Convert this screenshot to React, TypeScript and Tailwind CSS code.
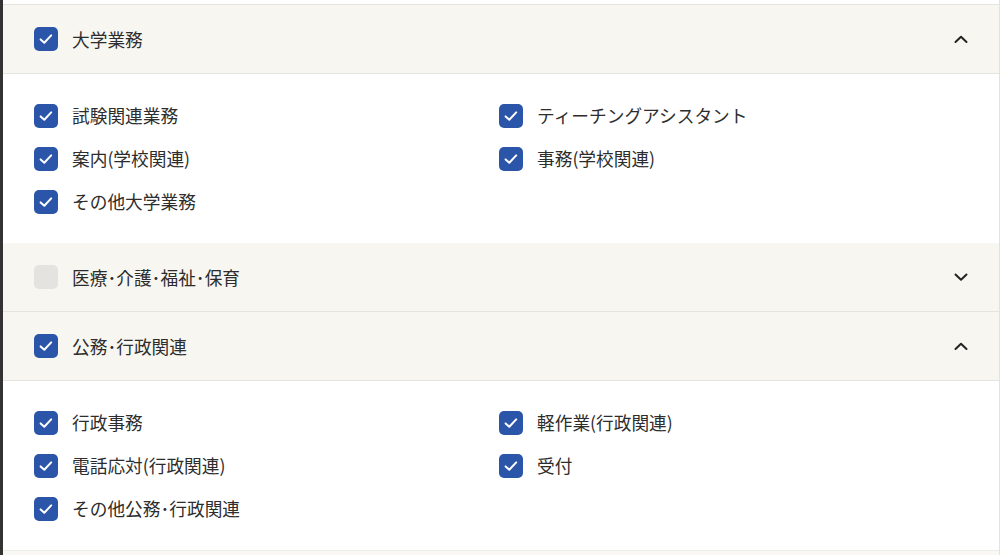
import React from "react";

const Check = ({ on }: { on: boolean }) =>
  on ? (
    <span className="flex h-6 w-6 shrink-0 items-center justify-center rounded-[5px] bg-[#2a55a8]">
      <svg width="16" height="16" viewBox="0 0 16 16" fill="none">
        <path d="M2.6 8.4 L6.3 11.8 L13.2 4.4" stroke="white" strokeWidth="2" strokeLinecap="round" strokeLinejoin="round" />
      </svg>
    </span>
  ) : (
    <span className="h-6 w-6 shrink-0 rounded-[5px] bg-[#e4e3e0]" />
  );

const Chevron = ({ up }: { up: boolean }) => (
  <svg width="16" height="10" viewBox="0 0 16 10" fill="none">
    <path d={up ? "M2.5 8 L8 2.8 L13.5 8" : "M2.5 2.5 L8 7.7 L13.5 2.5"} stroke="#222" strokeWidth="2" strokeLinecap="round" strokeLinejoin="round" />
  </svg>
);

const Header = ({ label, on, up }: { label: string; on: boolean; up: boolean }) => (
  <div className="flex h-[69px] items-center justify-between border-b border-[#e6e4de] bg-[#f7f6f1] pl-[31px] pr-[30px]">
    <div className="flex items-center gap-[14px]">
      <Check on={on} />
      <span className="text-[17.7px] text-[#2d2d2d]">{label}</span>
    </div>
    <Chevron up={up} />
  </div>
);

const Item = ({ label }: { label: string }) => (
  <div className="flex h-[43px] items-center gap-[14px]">
    <Check on />
    <span className="text-[17.7px] text-[#2d2d2d]">{label}</span>
  </div>
);

const Body = ({ items }: { items: string[] }) => (
  <div className="grid grid-cols-[465px_1fr] bg-white pl-[31px] pt-[20px] pb-[20px]">
    {items.map((t, i) => (
      <div key={i}>{t ? <Item label={t} /> : null}</div>
    ))}
  </div>
);

export default function App() {
  return (
    <div
      className="h-[555px] w-[1000px] overflow-hidden bg-white"
      style={{ fontFamily: '"Noto Sans CJK JP", "Noto Sans", sans-serif' }}
    >
      <div className="flex h-full border-l-[3px] border-l-[#333] border-r border-r-[#e2e2e2]">
        <div className="flex-1">
          <div className="h-[5px] border-b border-[#e6e4de] bg-white" />
          <Header label="大学業務" on up />
          <Body items={["試験関連業務", "ティーチングアシスタント", "案内(学校関連)", "事務(学校関連)", "その他大学業務", ""]} />
          <Header label="医療･介護･福祉･保育" on={false} up={false} />
          <Header label="公務･行政関連" on up />
          <Body items={["行政事務", "軽作業(行政関連)", "電話応対(行政関連)", "受付", "その他公務･行政関連", ""]} />
          <div className="h-[20px] border-t border-[#eeece6] bg-[#f9f8f5]" />
        </div>
      </div>
    </div>
  );
}
